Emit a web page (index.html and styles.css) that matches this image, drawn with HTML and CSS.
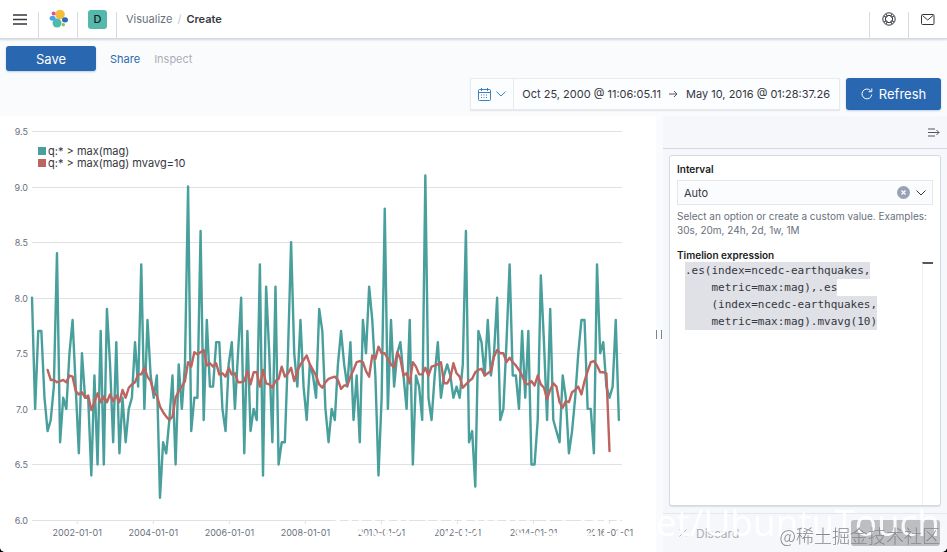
FILE: index.html
```
<!DOCTYPE html>
<html lang="en">
<head>
  <meta charset="UTF-8" />
  <meta name="viewport" content="width=device-width, initial-scale=1" />
  <title>Create - Kibana</title>
  <link rel="stylesheet" href="styles.css">
</head>
<body>
  <header class="header">
    <button class="header-btn" aria-label="Menu">
      <svg width="14" height="12" viewBox="0 0 14 12" stroke="#343741" stroke-width="1.600"><path d="M0 2h14M0 6.500h14M0 11h14"/></svg>
    </button>
    <a href="#" class="header-btn" aria-label="Elastic home">
      <svg width="20" height="20" viewBox="0 0 20 20">
        <circle cx="11" cy="5.500" r="4.800" fill="#f4bd3c"/>
        <circle cx="8" cy="14" r="4.500" fill="#4fb9ad"/>
        <circle cx="4.600" cy="4.500" r="2" fill="#e0529c"/>
        <ellipse cx="3.600" cy="9.300" rx="3" ry="2.500" fill="#4ba3e3"/>
        <ellipse cx="16" cy="10.800" rx="3" ry="2.600" fill="#2a6ab5"/>
        <circle cx="14.300" cy="15.700" r="1.700" fill="#8cc152"/>
      </svg>
    </a>
    <button class="header-btn" aria-label="Default space"><span class="space">D</span></button>
    <nav class="breadcrumbs">
      <a href="#">Visualize</a><span class="slash">/</span><strong>Create</strong>
    </nav>
    <button class="header-btn right" aria-label="Help">
      <svg width="14" height="14" viewBox="0 0 14 14" fill="none" stroke="#343741">
        <circle cx="7" cy="7" r="6.200"/><circle cx="7" cy="7" r="3.700"/>
        <path d="M2 4l2.500 1.500M4 2l1.500 2.500M12 4L9.500 5.500M10 2L8.500 4.500M2 10l2.500-1.500M4 12l1.500-2.500M12 10L9.500 8.500M10 12L8.500 9.500"/>
      </svg>
    </button>
    <button class="header-btn right" aria-label="Newsfeed">
      <svg width="14" height="11" viewBox="0 0 14 11" fill="none" stroke="#343741"><rect x=".5" y=".5" width="12.500" height="10" rx="1"/><path d="M1.500 1.500L6.700 6l5.300-4.500"/></svg>
    </button>
  </header>

  <div class="toolbar">
    <button class="btn save">Save</button>
    <button class="link">Share</button>
    <button class="link" disabled>Inspect</button>
  </div>

  <div class="query">
    <div class="datepicker">
      <button class="quick" aria-label="Quick select">
        <svg width="13" height="13" viewBox="0 0 13 13" fill="none" stroke="#3f7fc0"><rect x=".5" y="1.500" width="12" height="11" rx="1"/><path d="M.5 4.500h12M3.500 0v3M9.500 0v3"/><path d="M3 7h7M3 9.500h7" stroke-dasharray="1 1.500"/></svg>
        <svg width="10" height="6" viewBox="0 0 10 6" fill="none" stroke="#3f7fc0"><path d="M.5.7L5 5 9.500.7"/></svg>
      </button>
      <button class="date">Oct 25, 2000 @ 11:06:05.11</button>
      <svg width="9" height="8" viewBox="0 0 9 8" fill="none" stroke="#53575f"><path d="M0 4h8M5 1l3 3-3 3"/></svg>
      <button class="date">May 10, 2016 @ 01:28:37.26</button>
    </div>
    <button class="btn refresh">
      <svg width="12" height="12" viewBox="0 0 12 12" fill="none" stroke="#fff"><path d="M10.800 6.500A4.900 4.900 0 1 1 9.500 2.600M10.800.5v3.200H7.600"/></svg>
      Refresh
    </button>
  </div>

  <main class="editor">
    <section class="vis">
      <svg id="chart" role="img" aria-label="Earthquake magnitude over time"></svg>
      <ul class="legend">
        <li>q:* &gt; max(mag)</li>
        <li class="avg">q:* &gt; max(mag) mvavg=10</li>
      </ul>
    </section>
    <div class="resizer"></div>
    <aside class="side">
      <div class="side-top">
        <button class="icon-btn" aria-label="Collapse panel">
          <svg width="12" height="9" viewBox="0 0 12 9" fill="none" stroke="#53575f"><path d="M0 1h7M0 4.500h11M0 8h7M8.500 2l2.500 2.500L8.500 7"/></svg>
        </button>
      </div>
      <form class="panel">
        <label for="interval">Interval</label>
        <div class="combo">
          <input id="interval" type="text" value="Auto">
          <button type="button" class="clear" aria-label="Clear"><svg width="5" height="5" viewBox="0 0 5 5" stroke="#fff" stroke-width="1.200"><path d="M.5.5l4 4M4.500.5l-4 4"/></svg></button>
          <button type="button" class="icon-btn" aria-label="Open list"><svg width="10" height="6" viewBox="0 0 10 6" fill="none" stroke="#343741"><path d="M.5.5L5 5 9.500.5"/></svg></button>
        </div>
        <p class="help">Select an option or create a custom value. Examples: 30s, 20m, 24h, 2d, 1w, 1M</p>
        <h2>Timelion expression</h2>
        <div class="code">
          <pre contenteditable="true" aria-label="Timelion expression"><mark>.es(index=ncedc-earthquakes,</mark>
<mark>    metric=max:mag),.es</mark>
<mark>    (index=ncedc-earthquakes,</mark>
<mark>    metric=max:mag).mvavg(10)</mark></pre>
          <div class="ruler"></div>
        </div>
      </form>
      <div class="side-bottom">
        <button class="discard" disabled><svg width="8" height="8" viewBox="0 0 8 8" stroke="#b5b9c0"><path d="M.5.5l7 7M7.500.5l-7 7"/></svg>Discard</button>
        <button class="update" disabled aria-label="Update"></button>
      </div>
    </aside>
  </main>

  <div class="mark-url">https://blog.csdn.net/UbuntuTouch</div>
  <div class="mark-site">@稀土掘金技术社区</div>

  <script>
    // monthly max(mag), October 2000 to June 2016
    const mags = [
      8.0, 7.0, 7.7, 7.7, 7.1, 6.8, 6.9, 7.2, 8.4, 6.7, 7.1, 7.0, 7.5, 7.8, 7.2, 6.6, 7.5, 7.1, 7.1, 6.4,
      7.3, 6.5, 7.7, 6.5, 7.9, 7.4, 6.7, 7.6, 6.6, 7.1, 6.7, 7.0, 7.1, 7.6, 7.2, 8.3, 7.0, 7.8, 7.3, 7.1,
      7.3, 6.2, 6.7, 6.6, 6.9, 7.3, 6.5, 7.4, 7.0, 7.4, 9.0, 6.8, 7.1, 7.1, 8.6, 6.9, 7.8, 7.2, 7.2, 7.6,
      7.6, 7.0, 6.8, 7.4, 7.6, 7.0, 7.5, 8.0, 6.6, 7.7, 6.8, 7.0, 6.9, 8.3, 6.4, 8.1, 7.5, 6.7, 8.1, 6.5,
      6.7, 6.7, 7.5, 8.5, 7.5, 7.2, 7.8, 7.2, 6.9, 7.4, 7.3, 7.1, 7.9, 7.7, 7.0, 6.7, 7.0, 6.9, 7.4, 7.7,
      7.4, 7.2, 7.6, 6.9, 7.3, 6.7, 7.8, 7.5, 8.1, 7.8, 7.3, 6.4, 7.1, 8.8, 7.0, 7.8, 7.2, 7.5, 7.6, 7.3,
      7.0, 7.8, 6.5, 7.3, 7.2, 6.9, 9.1, 7.1, 6.9, 7.3, 7.6, 7.1, 7.3, 7.4, 7.3, 7.1, 7.2, 7.1, 7.4, 8.6,
      6.7, 6.8, 6.3, 7.7, 7.6, 7.3, 7.8, 7.3, 7.5, 8.0, 6.9, 7.0, 7.6, 8.3, 7.3, 7.3, 7.0, 7.7, 7.1, 7.7,
      6.5, 6.5, 6.9, 8.2, 7.6, 6.9, 7.9, 6.9, 6.8, 6.7, 7.3, 7.1, 6.6, 6.8, 7.1, 7.5, 7.8, 7.8, 7.0, 7.0,
      6.6, 8.3, 7.5, 7.6, 7.2, 7.1, 7.2, 7.8, 6.9
    ];
    const svg = document.getElementById('chart');

    function line(points, color) {
      return `<polyline points="${points.join(' ')}" fill="none" stroke="${color}" stroke-width="2.4" stroke-linejoin="round" stroke-linecap="round"/>`;
    }

    function draw() {
      const { width, height } = svg.getBoundingClientRect();
      const left = 32, right = width - 34, top = 15, bottom = height - 32;
      const step = (right - left) / 189;
      const x = i => left + i * step;
      const y = v => bottom - (v - 6) / 3.5 * (bottom - top);
      let out = '';

      for (let v = 6; v <= 9.5; v += 0.5) {
        const gy = Math.round(y(v)) + 0.5;
        out += `<path d="M${left} ${gy}H${right}" stroke="#e0e1e3"/>`;
        out += `<text x="${left - 4}" y="${gy + 3}" text-anchor="end">${v.toFixed(1)}</text>`;
      }
      for (let year = 2002; year <= 2016; year += 2) {
        const tx = x((year - 2002) * 12.18 + 14.5);
        out += `<path d="M${tx} ${bottom}v4" stroke="#e0e1e3"/>`;
        out += `<text x="${tx}" y="${bottom + 16}" text-anchor="middle">${year}-01-01</text>`;
      }

      const avg = [];
      for (let i = 5; i <= 185; i++) {
        const sum = mags.slice(i - 5, i + 5).reduce((a, b) => a + b, 0);
        avg.push(x(i) + ',' + y(sum / 10));
      }
      out += line(mags.map((v, i) => x(i) + ',' + y(v)), '#489f9b');
      out += line(avg, '#bd6461');
      svg.innerHTML = out;
    }

    draw();
    window.addEventListener('resize', draw);
  </script>
</body>
</html>
```
FILE: styles.css
```
* {
  box-sizing: border-box;
}

html {
  background: #000;
}

body {
  margin: 0;
  height: 100vh;
  display: flex;
  flex-direction: column;
  overflow: hidden;
  font-family: Inter, "Liberation Sans", sans-serif;
  font-size: 11px;
  color: #343741;
  background: #fafbfd;
  border-radius: 0 0 5px 5px;
}

button, input {
  font: inherit;
  color: inherit;
  background: none;
  border: 0;
  padding: 0;
}

svg {
  display: block;
}

.header {
  display: flex;
  height: 39px;
  flex: none;
  background: #fff;
  border-bottom: 1px solid #d3dae6;
  box-shadow: 0 1px 2px rgba(0, 0, 0, 0.15);
}

.header-btn {
  width: 39px;
  display: flex;
  align-items: center;
  justify-content: center;
  background: linear-gradient(#d8dbe1, #d8dbe1) right bottom / 1px 26px no-repeat;
}

.header-btn.right {
  background-position: left bottom;
}

.space {
  width: 19px;
  height: 19px;
  border-radius: 3px;
  background: #54b9ab;
  color: #1a1c21;
  font-weight: 500;
  line-height: 19px;
}

.breadcrumbs {
  flex: 1;
  padding-left: 9px;
  line-height: 39px;
}

.breadcrumbs a {
  color: #69707d;
  text-decoration: none;
}

.breadcrumbs .slash {
  color: #c5cad3;
  margin: 0 5px;
}

.breadcrumbs strong {
  font-weight: 600;
}

.toolbar {
  display: flex;
  align-items: center;
  gap: 14px;
  padding: 7px 6px 0;
}

.btn {
  background: #2967b0;
  color: #fff;
  border-radius: 3px;
  box-shadow: 0 1px 2px rgba(41, 103, 176, 0.3);
  font-size: 13px;
}

.save {
  width: 90px;
  height: 25px;
}

.link {
  color: #2967b0;
}

.link:disabled {
  color: #abafb7;
}

.query {
  display: flex;
  justify-content: flex-end;
  gap: 6px;
  padding: 7px 6px 6px;
}

.datepicker {
  display: flex;
  align-items: center;
  gap: 8px;
  height: 32px;
  padding-right: 9px;
  background: #fcfdfe;
  border: 1px solid #e6eaf1;
  box-shadow: 0 1px 1px rgba(0, 0, 0, 0.08);
}

.quick {
  display: flex;
  align-items: center;
  justify-content: center;
  gap: 5px;
  width: 43px;
  height: 100%;
  border-right: 1px solid #e6eaf1;
}

.refresh {
  display: flex;
  align-items: center;
  justify-content: center;
  gap: 6px;
  width: 95px;
  height: 32px;
}

.editor {
  flex: 1;
  min-height: 0;
  display: flex;
}

.vis {
  flex: 1;
  min-width: 0;
  position: relative;
  background: #fff;
  border-radius: 0 0 0 5px;
}

#chart {
  width: 100%;
  height: 100%;
  font-size: 9px;
  fill: #69707d;
}

/* sits over the plot */
.legend {
  position: absolute;
  top: 29px;
  left: 38px;
  margin: 0;
  padding: 0;
  list-style: none;
  line-height: 12px;
}

.legend li::before {
  content: "";
  display: inline-block;
  width: 8px;
  height: 8px;
  margin-right: 2px;
  background: #489f9b;
}

.legend .avg::before {
  background: #bd6461;
}

.resizer {
  width: 7px;
  background: #fafbfd;
  display: flex;
  align-items: center;
}

.resizer::before {
  content: "";
  width: 4px;
  height: 9px;
  border: solid #7d838e;
  border-width: 0 1px;
}

.side {
  width: 284px;
  display: flex;
  flex-direction: column;
  background: #f5f7fa;
  border-radius: 0 0 5px 0;
}

.side-top {
  display: flex;
  align-items: center;
  justify-content: flex-end;
  height: 33px;
  padding-right: 7px;
  border-bottom: 1px solid #d3dae6;
}

.panel {
  flex: 1;
  min-height: 0;
  display: flex;
  flex-direction: column;
  margin: 6px 6px 7px;
  padding: 7px 7px 0;
  background: #fff;
  border: 1px solid #d3dae6;
  border-radius: 3px;
  box-shadow: 0 1px 1px rgba(0, 0, 0, 0.1);
}

.panel label,
.panel h2 {
  margin: 0;
  font-size: 10px;
  font-weight: 600;
  line-height: 13px;
  color: #1a1c21;
}

.combo {
  display: flex;
  align-items: center;
  gap: 6px;
  height: 25px;
  margin-top: 4px;
  padding: 0 6px;
  background: #fbfcfd;
  border: 1px solid #e3e8f0;
}

.combo input {
  flex: 1;
  min-width: 0;
}

.clear {
  display: flex;
  align-items: center;
  justify-content: center;
  width: 13px;
  height: 13px;
  border-radius: 50%;
  background: #98a2b3;
}

.help {
  margin: 4px 0 12px;
  font-size: 10px;
  line-height: 14px;
  color: #69707d;
}

.code {
  flex: 1;
  min-height: 0;
  display: flex;
  justify-content: space-between;
}

.code pre {
  margin: 0 0 0 8px;
  font: 11px/17px "DejaVu Sans Mono", monospace;
  outline: none;
}

.code mark {
  display: inline-block;
  color: inherit;
  background: #e0e1e6;
}

.ruler {
  width: 11px;
  border-left: 1px solid #eef0f4;
  border-top: 2px solid #53575f;
}

.side-bottom {
  display: flex;
  justify-content: space-between;
  align-items: flex-start;
  height: 39px;
  padding: 6px 7px 0 16px;
  border-top: 1px solid #e3e8f0;
}

.discard {
  display: flex;
  align-items: center;
  gap: 9px;
  height: 26px;
  font-size: 12px;
  color: #abafb7;
}

.update {
  width: 89px;
  height: 26px;
  border-radius: 3px;
  background: #bdbec1;
}

/* watermarks over the page */
.mark-url,
.mark-site {
  position: fixed;
  right: 7px;
  white-space: nowrap;
  pointer-events: none;
}

.mark-url {
  bottom: 5px;
  font: 37px/50px "Open Sans", sans-serif;
  color: rgba(255, 255, 255, 0.9);
}

.mark-site {
  bottom: 5px;
  font: 18px/24px "Noto Sans CJK SC", sans-serif;
  font-weight: 300;
  color: #85878b;
}
```
